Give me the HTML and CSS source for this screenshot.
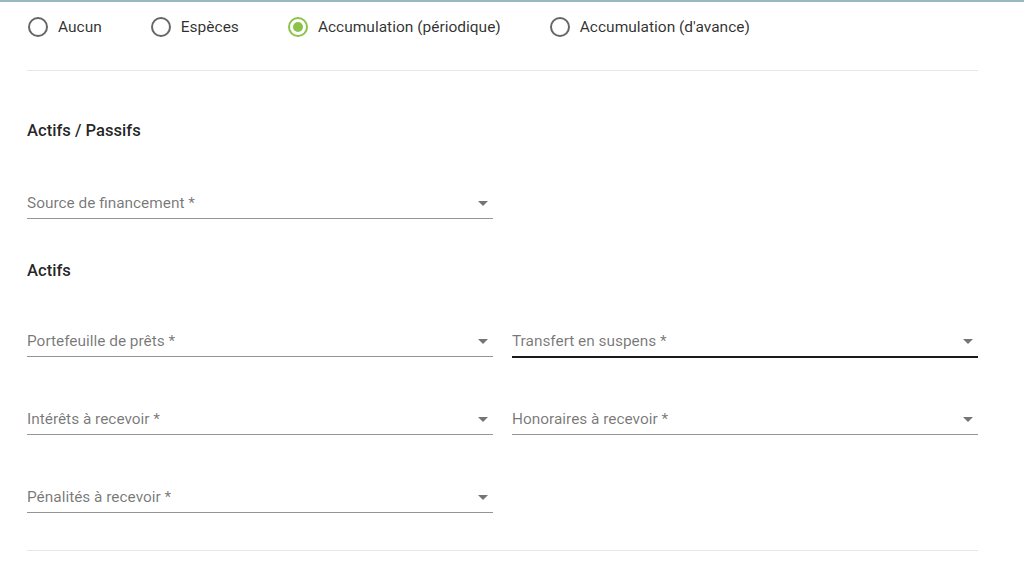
FILE: index.html
```html
<!DOCTYPE html>
<html lang="fr">
<head>
    <meta charset="UTF-8">
    <meta name="viewport" content="width=device-width, initial-scale=1.0">
    <title>Comptabilité du produit</title>
    <link rel="stylesheet" href="styles.css">
</head>
<body>
    <div class="page">
        <div class="radio-group">
            <label class="radio"><span class="radio-circle"></span>Aucun</label>
            <label class="radio"><span class="radio-circle"></span>Espèces</label>
            <label class="radio checked"><span class="radio-circle"></span>Accumulation (périodique)</label>
            <label class="radio"><span class="radio-circle"></span>Accumulation (d'avance)</label>
        </div>
        <div class="divider"></div>

        <h3 class="section-title">Actifs / Passifs</h3>
        <div class="grid">
            <div class="select"><span class="select-label">Source de financement *</span><span class="arrow"></span></div>
        </div>

        <h3 class="section-title second">Actifs</h3>
        <div class="grid">
            <div class="select"><span class="select-label">Portefeuille de prêts *</span><span class="arrow"></span></div>
            <div class="select focused"><span class="select-label">Transfert en suspens *</span><span class="arrow"></span></div>
            <div class="select"><span class="select-label">Intérêts à recevoir *</span><span class="arrow"></span></div>
            <div class="select"><span class="select-label">Honoraires à recevoir *</span><span class="arrow"></span></div>
            <div class="select"><span class="select-label">Pénalités à recevoir *</span><span class="arrow"></span></div>
        </div>
        <div class="divider bottom"></div>
    </div>
</body>
</html>
```

FILE: styles.css
```css
body {
    margin: 0;
    font-family: Roboto, "Noto Sans", sans-serif;
    color: rgba(0, 0, 0, 0.87);
    background-color: #fff;
    border-top: 2px solid #9ab8c0;
}
.page {
    width: 951px;
    padding-left: 27px;
}
.radio-group {
    display: flex;
    gap: 49px;
    padding: 15px 0 33px 1px;
}
.radio {
    display: flex;
    align-items: center;
    font-size: 15.5px;
    line-height: 20px;
    color: rgba(0, 0, 0, 0.82);
}
.radio-circle {
    width: 20px;
    height: 20px;
    box-sizing: border-box;
    border: 2px solid rgba(0, 0, 0, 0.6);
    border-radius: 50%;
    margin-right: 10px;
    display: flex;
    align-items: center;
    justify-content: center;
}
.radio.checked .radio-circle {
    border-color: #8bc34a;
}
.radio.checked .radio-circle::after {
    content: "";
    width: 10px;
    height: 10px;
    border-radius: 50%;
    background-color: #8bc34a;
}
.divider {
    border-top: 1px solid #e6e6e6;
}
.divider.bottom {
    margin-top: 37px;
}
.section-title {
    margin: 48px 0 36px;
    font-size: 16.6px;
    line-height: 24px;
    font-weight: 500;
    color: rgba(0, 0, 0, 0.87);
}
.section-title.second {
    margin: 40px 0 34px;
}
.grid {
    display: grid;
    grid-template-columns: 466px 466px;
    column-gap: 19px;
    row-gap: 38px;
}
.select {
    display: flex;
    align-items: center;
    height: 30px;
    padding-top: 9px;
    border-bottom: 1px solid #949494;
}
.select.focused {
    border-bottom-color: #1a1a1a;
    box-shadow: 0 1px 0 #1a1a1a;
}
.select-label {
    flex: 1;
    font-size: 15.4px;
    color: rgba(0, 0, 0, 0.54);
}
.arrow {
    width: 0;
    height: 0;
    border-left: 5px solid transparent;
    border-right: 5px solid transparent;
    border-top: 5px solid #757575;
    margin-right: 5px;
}
```
